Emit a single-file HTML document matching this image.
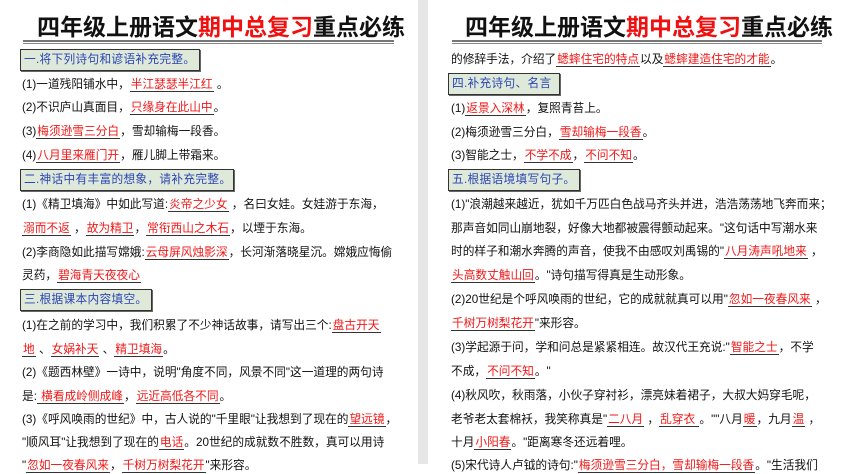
<!DOCTYPE html>
<html><head><meta charset="utf-8"><style>
*{margin:0;padding:0;box-sizing:border-box}
body{width:845px;height:464px;overflow:hidden;background:#fff;font-family:"Liberation Sans","Noto Sans CJK SC",sans-serif;position:relative}
.strip{position:absolute;left:418px;top:0;width:10px;height:464px;background:#e6e6e6}
.t{position:absolute;font-size:23px;font-weight:bold;white-space:nowrap;color:#111;line-height:30px}
.t .r{color:#f01010}
.hr{position:absolute;height:4px;border-top:2px solid #777;border-bottom:1px solid #888}
.l{position:absolute;font-size:11.7px;line-height:16px;white-space:nowrap;color:#111}
.r{color:#f01818}
.u{color:#f01818;border-bottom:1px solid #333;padding:0 1px}
.box{position:absolute;height:22px;background:#dfe9d9;border:1px solid #333;box-shadow:1px 1px 0 #666;color:#2a45b5;font-size:11.7px;line-height:20px;padding-left:3px;white-space:nowrap;letter-spacing:0.3px}
</style></head><body>
<div class="strip"></div>

<div class="t" style="left:37px;top:12px">四年级上册语文<span class="r">期中总复习</span>重点必练</div>
<div class="hr" style="left:23px;top:40px;width:371px"></div>
<div class="box" style="left:20px;top:49px;width:180px">一.将下列诗句和谚语补充完整。</div>
<div class="l" style="left:22px;top:77px">(1)一道残阳铺水中，<span class="u">半江瑟瑟半江红</span> 。</div>
<div class="l" style="left:22px;top:100px">(2)不识庐山真面目，<span class="u">只缘身在此山中</span>。</div>
<div class="l" style="left:22px;top:124px">(3)<span class="u">梅须逊雪三分白</span>，雪却输梅一段香。</div>
<div class="l" style="left:22px;top:148px">(4)<span class="u">八月里来雁门开</span>，雁儿脚上带霜来。</div>
<div class="box" style="left:20px;top:169px;width:214px">二.神话中有丰富的想象，请补充完整。</div>
<div class="l" style="left:22px;top:197px">(1)《精卫填海》中如此写道:<span class="u">炎帝之少女</span> ，名曰女娃。女娃游于东海，</div>
<div class="l" style="left:22px;top:221px"><span class="u">溺而不返</span> ，<span class="u">故为精卫</span>，<span class="u">常衔西山之木石</span>，以堙于东海。</div>
<div class="l" style="left:22px;top:245px">(2)李商隐如此描写嫦娥:<span class="u">云母屏风烛影深</span>，长河渐落晓星沉。嫦娥应悔偷</div>
<div class="l" style="left:22px;top:268px">灵药，<span class="u">碧海青天夜夜心</span></div>
<div class="box" style="left:20px;top:289px;width:132px">三.根据课本内容填空。</div>
<div class="l" style="left:22px;top:318px">(1)在之前的学习中，我们积累了不少神话故事，请写出三个:<span class="u">盘古开天</span></div>
<div class="l" style="left:22px;top:342px"><span class="u">地</span> 、<span class="u">女娲补天</span> 、<span class="u">精卫填海</span>。</div>
<div class="l" style="left:22px;top:365px">(2)《题西林壁》一诗中，说明"角度不同，风景不同"这一道理的两句诗</div>
<div class="l" style="left:22px;top:389px">是:<span class="u"> 横看成岭侧成峰</span>，<span class="u">远近高低各不同</span>。</div>
<div class="l" style="left:22px;top:412px">(3)《呼风唤雨的世纪》中，古人说的"千里眼"让我想到了现在的<span class="u">望远镜</span>，</div>
<div class="l" style="left:22px;top:435px">"顺风耳"让我想到了现在的<span class="u">电话</span>。20世纪的成就数不胜数，真可以用诗</div>
<div class="l" style="left:22px;top:458px">"<span class="u">忽如一夜春风来</span>，<span class="u">千树万树梨花开</span>"来形容。</div>

<div class="t" style="left:465px;top:12px">四年级上册语文<span class="r">期中总复习</span>重点必练</div>
<div class="hr" style="left:452px;top:40px;width:370px"></div>
<div class="l" style="left:451px;top:52px">的修辞手法，介绍了<span class="u">蟋蟀住宅的特点</span>以及<span class="u">蟋蟀建造住宅的才能</span>。</div>
<div class="box" style="left:448px;top:73px;width:112px">四.补充诗句、名言</div>
<div class="l" style="left:451px;top:101px">(1)<span class="u">返景入深林</span>，复照青苔上。</div>
<div class="l" style="left:451px;top:125px">(2)梅须逊雪三分白，<span class="u">雪却输梅一段香</span>。</div>
<div class="l" style="left:451px;top:148px">(3)智能之士，<span class="u">不学不成</span>，<span class="u">不问不知</span>。</div>
<div class="box" style="left:448px;top:169px;width:132px">五.根据语境填写句子。</div>
<div class="l" style="left:451px;top:197px">(1)"浪潮越来越近，犹如千万匹白色战马齐头并进，浩浩荡荡地飞奔而来；</div>
<div class="l" style="left:451px;top:221px">那声音如同山崩地裂，好像大地都被震得颤动起来。"这句话中写潮水来</div>
<div class="l" style="left:451px;top:244px">时的样子和潮水奔腾的声音，使我不由感叹刘禹锡的"<span class="u">八月涛声吼地来</span> ，</div>
<div class="l" style="left:451px;top:268px"><span class="u">头高数丈触山回</span>。"诗句描写得真是生动形象。</div>
<div class="l" style="left:451px;top:292px">(2)20世纪是个呼风唤雨的世纪，它的成就就真可以用"<span class="u">忽如一夜春风来</span> ，</div>
<div class="l" style="left:451px;top:316px"><span class="u">千树万树梨花开</span>"来形容。</div>
<div class="l" style="left:451px;top:340px">(3)学起源于问，学和问总是紧紧相连。故汉代王充说:"<span class="u">智能之士</span>，不学</div>
<div class="l" style="left:451px;top:364px">不成，<span class="u">不问不知</span>。"</div>
<div class="l" style="left:451px;top:388px">(4)秋风吹，秋雨落，小伙子穿衬衫，漂亮妹着裙子，大叔大妈穿毛呢，</div>
<div class="l" style="left:451px;top:412px">老爷老太套棉袄，我笑称真是"<span class="u">二八月</span> ，<span class="u">乱穿衣 </span>。""八月<span class="u">暖</span>，九月<span class="u">温</span> ，</div>
<div class="l" style="left:451px;top:435px">十月<span class="u">小阳春</span>。"距离寒冬还远着哩。</div>
<div class="l" style="left:451px;top:458px">(5)宋代诗人卢钺的诗句:"<span class="u">梅须逊雪三分白，雪却输梅一段香</span>。"生活我们</div>
</body></html>
